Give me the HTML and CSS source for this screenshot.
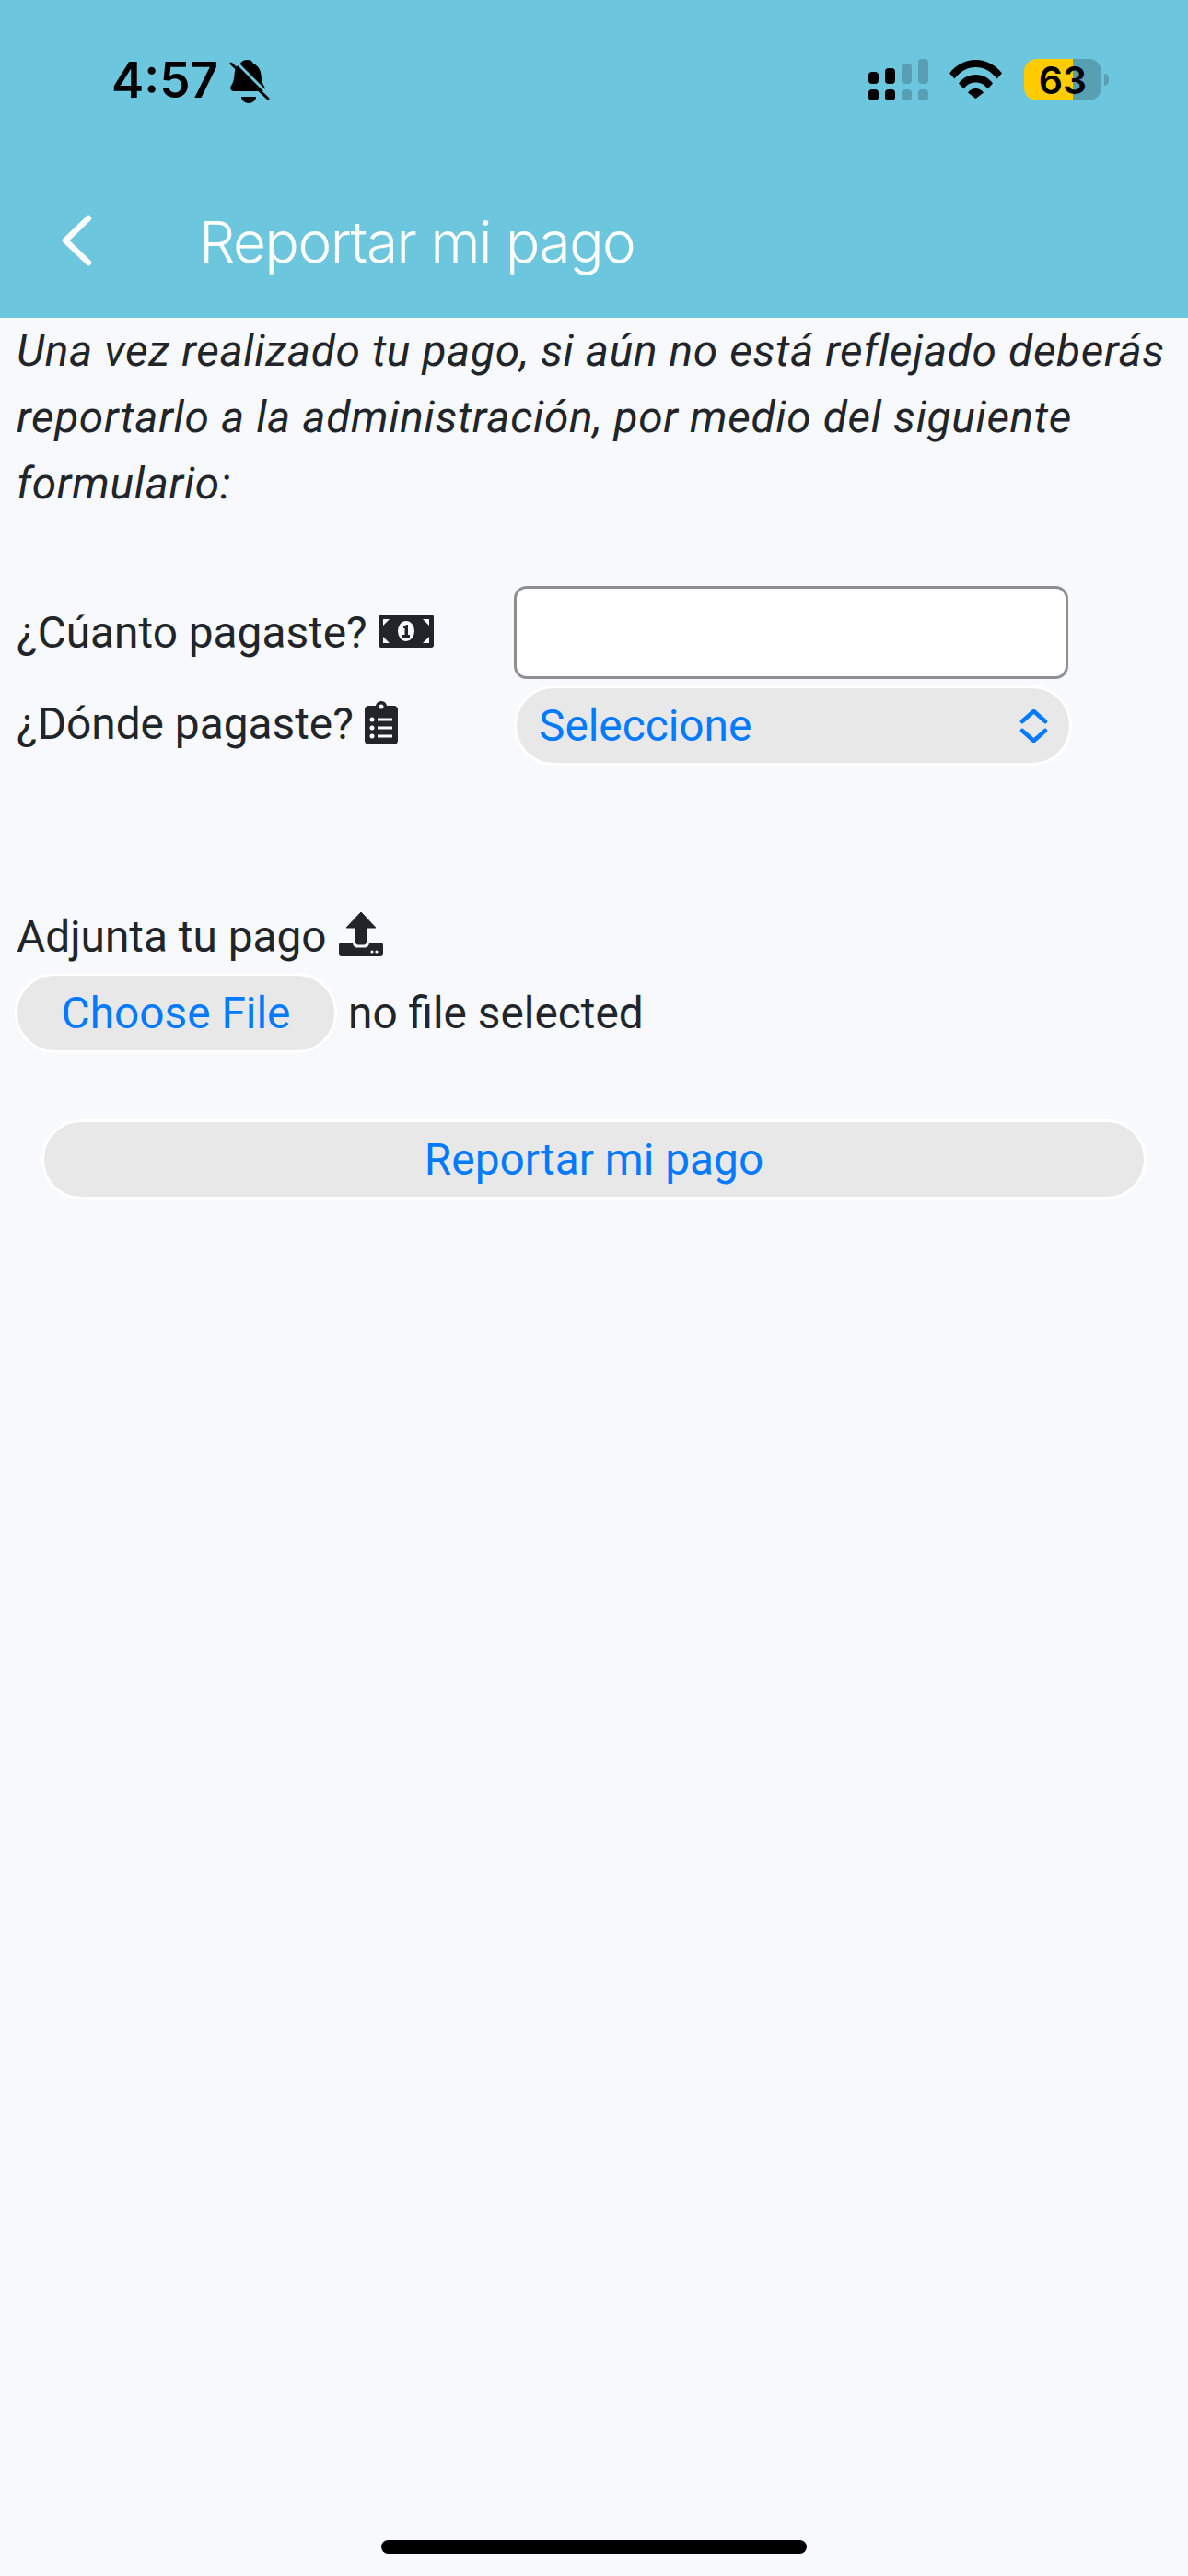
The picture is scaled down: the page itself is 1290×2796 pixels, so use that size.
FILE: index.html
```html
<!DOCTYPE html>
<html lang="es">
<head>
    <meta charset="UTF-8">
    <meta name="viewport" content="width=device-width, initial-scale=1.0">
    <title>Reportar mi pago</title>
    <link rel="stylesheet" href="styles.css">
</head>
<body>
    <div class="page">
        <!-- Status bar -->
        <div class="status-bar">
            <div class="status-left">
                <span class="time">4:57</span>
                <svg class="bell" viewBox="9 9 44 50" width="44" height="50">
                    <path d="M29 10c3 0 5 1.500 6 4 5 2 8 6.500 8.500 12 .5 5 1 9 3 12 2 3 1.500 6-1 6H14c-3 0-5-3-3-6 2-3 3-6 3.500-12 .5-7 3-10 6.500-12 1-2.500 4-4 8-4z" fill="#000"/>
                    <path d="M22 50h16c0 4-4 7-8 7s-8-3-8-7z" fill="#000"/>
                    <path d="M14 10l38 38" stroke="#6cc6dd" stroke-width="3"/>
                    <path d="M11 14l40 38" stroke="#000" stroke-width="3" stroke-linecap="round"/>
                </svg>
            </div>
            <div class="status-right">
                <svg class="signal" viewBox="0 0 65 45" width="65" height="45">
                    <g fill="#000">
                        <rect x="0" y="14" width="11" height="13" rx="4"/>
                        <rect x="0" y="33" width="11" height="12" rx="4"/>
                        <rect x="18" y="10" width="11" height="17" rx="4"/>
                        <rect x="18" y="33" width="11" height="12" rx="4"/>
                    </g>
                    <g fill="#589fb3">
                        <rect x="36" y="5" width="11" height="22" rx="4"/>
                        <rect x="36" y="33" width="11" height="12" rx="4"/>
                        <rect x="54" y="0" width="11" height="27" rx="4"/>
                        <rect x="54" y="33" width="11" height="12" rx="4"/>
                    </g>
                </svg>
                <svg class="wifi" viewBox="0 0 57 42" width="57" height="42">
                    <path d="M0 14.500C7 5.500 17 0 28.500 0S50 5.500 57 14.500l-5.500 6C45.500 12.500 37.500 8 28.500 8S11.500 12.500 5.500 20.500z" fill="#000"/>
                    <path d="M10 25.500C14.500 19.500 21 16 28.500 16s14 3.500 18.500 9.500l-5.500 6c-3-4.500-7.500-7-13-7s-10 2.500-13 7z" fill="#000"/>
                    <path d="M20 35.500c2-3 5-4.500 8.500-4.500s6.500 1.500 8.500 4.500L28.500 42z" fill="#000"/>
                </svg>
                <div class="battery">
                    <div class="battery-body"><span>63</span></div>
                    <div class="battery-nub"></div>
                </div>
            </div>
        </div>

        <!-- Header -->
        <div class="app-header">
            <svg class="back" viewBox="0 0 33 56" width="33" height="56">
                <path d="M29 4L4 28l25 24" fill="none" stroke="#fff" stroke-width="6.500" stroke-linecap="round" stroke-linejoin="round"/>
            </svg>
            <h1>Reportar mi pago</h1>
        </div>

        <div class="content">
            <p class="intro">Una vez realizado tu pago, si aún no está reflejado deberás reportarlo a la administración, por medio del siguiente formulario:</p>

            <form class="pay-form">
                <div class="form-row">
                    <label class="field-label">¿Cúanto pagaste?
                        <svg class="icon-money" viewBox="0 0 60 36" width="60" height="36">
                            <rect width="60" height="36" rx="3" fill="#212529"/>
                            <path d="M5 5h7L5 12zM55 5h-7l7 7zM5 31h7l-7-7zM55 31h-7l7-7z" fill="#f7f9fd"/>
                            <ellipse cx="30" cy="18" rx="9" ry="11" fill="#f7f9fd"/>
                            <path d="M27 13l3.500-2H32v11h2v3h-8v-3h2.500v-7H27z" fill="#212529"/>
                        </svg>
                    </label>
                    <input class="amount" type="text">
                </div>
                <div class="form-row select-row">
                    <label class="field-label">¿Dónde pagaste?
                        <svg class="icon-clipboard" viewBox="0 0 36 47" width="36" height="47">
                            <path d="M18 0c3 0 5.500 2 6 5h8c2.200 0 4 1.800 4 4v34c0 2.200-1.800 4-4 4H4c-2.200 0-4-1.800-4-4V9c0-2.200 1.800-4 4-4h8c.5-3 3-5 6-5zm0 3.500a2.500 2.500 0 1 0 0 5 2.500 2.500 0 0 0 0-5z" fill="#212529"/>
                            <g fill="#f7f9fd">
                                <circle cx="8" cy="20" r="2.500"/><rect x="14" y="18.500" width="16" height="3"/>
                                <circle cx="8" cy="29" r="2.500"/><rect x="14" y="27.500" width="16" height="3"/>
                                <circle cx="8" cy="38" r="2.500"/><rect x="14" y="36.500" width="16" height="3"/>
                            </g>
                        </svg>
                    </label>
                    <div class="select-box">
                        <span>Seleccione</span>
                        <svg viewBox="0 0 31 36" width="31" height="36">
                            <path d="M3 13L15.500 2 28 13M3 23l12.500 11L28 23" fill="none" stroke="#007aff" stroke-width="4.500" stroke-linecap="round" stroke-linejoin="round"/>
                        </svg>
                    </div>
                </div>

                <div class="attach-label">Adjunta tu pago
                    <svg class="icon-upload" viewBox="12 10 48 48" width="48" height="48">
                        <path d="M36 10l16 17H42v15c0 2-1.500 3-3 3h-6c-1.500 0-3-1-3-3V27H20z" fill="#212529" stroke="#212529" stroke-width="1" stroke-linejoin="round"/>
                        <path d="M15 43h12c0 3 2 5.500 5 5.500h8c3 0 5-2.500 5-5.500h12c2 0 3 1 3 3v9c0 2-1 3-3 3H15c-2 0-3-1-3-3v-9c0-2 1-3 3-3z" fill="#212529"/>
                        <circle cx="48" cy="53" r="1.600" fill="#f7f9fd"/><circle cx="53" cy="53" r="1.600" fill="#f7f9fd"/>
                    </svg>
                </div>
                <div class="file-row">
                    <button type="button" class="pill-btn file-btn">Choose File</button>
                    <span>no file selected</span>
                </div>

                <button type="submit" class="pill-btn submit-btn">Reportar mi pago</button>
            </form>
        </div>

        <div class="home-bar"></div>
    </div>
</body>
</html>
```

FILE: styles.css
```css
body {
    font-family: Roboto, sans-serif;
    margin: 0;
    padding: 0;
    background-color: #f7f9fd;
    color: #212529;
}

.page {
    display: flex;
    flex-direction: column;
    height: 2796px;
    overflow: hidden;
}

/* Status bar */
.status-bar {
    background-color: #6cc6dd;
    height: 145px;
    box-sizing: border-box;
    padding: 64px 86px 0 121px;
    display: flex;
    justify-content: space-between;
    align-items: flex-start;
}

.status-left {
    display: flex;
    align-items: flex-start;
    gap: 12px;
}

.time {
    font-family: Inter, sans-serif;
    font-weight: 600;
    font-size: 53px;
    line-height: 46px;
    color: #000;
}

.status-right {
    display: flex;
    align-items: flex-start;
    gap: 23px;
}

.wifi {
    margin-top: 1px;
}

.battery {
    display: flex;
    align-items: center;
    gap: 3px;
    margin-left: 1px;
}

.battery-body {
    width: 84px;
    height: 45px;
    border-radius: 14px;
    background: linear-gradient(to right, #ffcc00 63%, #589fb3 63%);
    display: flex;
    align-items: center;
    justify-content: center;
    font-family: Inter, sans-serif;
    font-weight: 600;
    font-size: 41px;
    color: #000;
}

.battery-nub {
    width: 5px;
    height: 13px;
    border-radius: 0 6px 6px 0;
    background-color: #589fb3;
}

/* Header */
.app-header {
    background-color: #6cc6dd;
    height: 200px;
    box-sizing: border-box;
    padding: 88px 0 0 67px;
    display: flex;
    align-items: flex-start;
}

.app-header h1 {
    margin: 0 0 0 116px;
    font-family: Inter, sans-serif;
    font-weight: 300;
    font-size: 62px;
    letter-spacing: -1.45px;
    line-height: 60px;
    color: #fff;
}

/* Content */
.content {
    padding: 0 0 0 18px;
    font-size: 47.8px;
    line-height: 72px;
}

.intro {
    margin: 0 0 75px;
    font-style: italic;
    letter-spacing: 0.65px;
    width: 1268px;
}

.form-row {
    display: grid;
    grid-template-columns: 540px 602px;
    align-items: center;
}

.select-row {
    margin-top: 7px;
}

.select-row .field-label {
    padding-bottom: 3px;
}

.field-label {
    display: flex;
    align-items: center;
    gap: 12px;
}

.icon-money,
.icon-clipboard {
    margin-bottom: 4px;
}

.amount {
    height: 101px;
    box-sizing: border-box;
    background: #fff;
    border: 3px solid #8e8e93;
    border-radius: 14px;
    padding: 0 20px;
    font-size: 47.8px;
}

.select-box {
    height: 87px;
    box-sizing: border-box;
    width: 606px;
    background-color: #e8e8e8;
    border: 3px solid #fff;
    border-radius: 44px;
    padding: 0 23px 0 24px;
    display: flex;
    align-items: center;
    justify-content: space-between;
    color: #007aff;
}

.attach-label {
    margin-top: 150px;
    display: flex;
    align-items: center;
    gap: 13px;
}

.icon-upload {
    margin-bottom: 6px;
}

.file-row {
    margin-top: 3px;
    display: flex;
    align-items: center;
    gap: 12px;
}

.pill-btn {
    height: 87px;
    box-sizing: border-box;
    background-color: #e8e8e8;
    border: 3px solid #fff;
    border-radius: 44px;
    color: #007aff;
    font-family: Roboto, sans-serif;
    font-size: 47.8px;
    padding: 0;
    cursor: pointer;
}

.file-btn {
    width: 350px;
    margin-left: -2px;
}

.submit-btn {
    display: block;
    width: 1200px;
    margin: 72px 0 0 27px;
}

.home-bar {
    margin: auto auto 24px;
    width: 462px;
    height: 15px;
    border-radius: 8px;
    background-color: #000;
}
```
